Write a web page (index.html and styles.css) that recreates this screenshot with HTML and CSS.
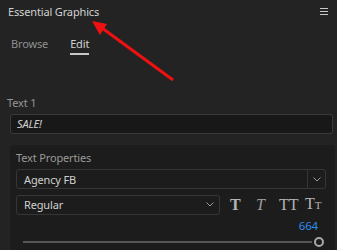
FILE: index.html
```html
<!DOCTYPE html>
<html>
<head>
<meta charset="utf-8">
<link rel="stylesheet" href="styles.css">
</head>
<body>
<div class="app">
  <header class="head">
    <span class="title">Essential Graphics</span>
    <span class="menu"><i></i><i></i><i></i></span>
  </header>
  <nav class="tabs">
    <span class="tab">Browse</span>
    <span class="tab active">Edit</span>
  </nav>
  <section class="layer">
    <div class="label">Text 1</div>
    <div class="field"><span>SALE!</span></div>
  </section>
  <section class="panel">
    <div class="ptitle">Text Properties</div>
    <div class="select wide">
      <span class="val">Agency FB</span>
      <span class="btn"><svg width="8" height="5" viewBox="0 0 8 5"><polyline points="0.5,0.5 4,4 7.5,0.5" fill="none" stroke="#9a9a9a" stroke-width="1"/></svg></span>
    </div>
    <div class="row">
      <div class="select narrow">
        <span class="val">Regular</span>
        <svg class="chev" width="8" height="5" viewBox="0 0 8 5"><polyline points="0.5,0.5 4,4 7.5,0.5" fill="none" stroke="#9a9a9a" stroke-width="1"/></svg>
      </div>
      <div class="styles">
        <span class="st bold">T</span>
        <span class="st ital">T</span>
        <span class="st caps">TT</span>
        <span class="st small">T<small>T</small></span>
      </div>
    </div>
    <div class="num">664</div>
    <div class="slider"><div class="track"></div><div class="knob"></div></div>
  </section>
</div>
<svg class="arrow" width="337" height="250" viewBox="0 0 337 250">
  <line x1="173" y1="80" x2="102" y2="28" stroke="#ee1111" stroke-width="3"/>
  <polygon points="92,21 107,24 100,35" fill="#ee1111"/>
</svg>
</body>
</html>
```
FILE: styles.css
```css
* { box-sizing: border-box; }
html, body { margin: 0; padding: 0; }
body {
  width: 337px;
  height: 250px;
  overflow: hidden;
  background: #232323;
  font-family: "Noto Sans", "Open Sans", sans-serif;
  font-size: 11px;
  letter-spacing: -0.15px;
  color: #cfcfcf;
  position: relative;
}
.app { display: flex; flex-direction: column; }
.head {
  display: flex;
  justify-content: space-between;
  align-items: center;
  height: 22px;
  padding: 0 9px 0 8px;
}
.title { color: #d2d2d2; font-size: 11px; }
.menu { display: flex; flex-direction: column; gap: 2px; }
.menu i { display: block; width: 8px; height: 1px; background: #c8c8c8; }
.tabs {
  display: flex;
  gap: 22px;
  padding: 14px 0 0 11px;
  height: 56px;
}
.tab { color: #8e8e8e; font-size: 11px; height: 19px; line-height: 16px; }
.tab.active { color: #d0d0d0; border-bottom: 2px solid #c8c8c8; }
.layer { padding: 18px 4px 0 7px; }
.label { color: #959595; font-size: 11px; line-height: 14px; height: 18px; }
.field {
  margin-left: 3px;
  height: 20px;
  background: #181818;
  border: 1px solid #3a3a3a;
  border-radius: 3px;
  padding-left: 6px;
  line-height: 18px;
  font-style: italic;
  color: #cfcfcf;
}
.panel {
  margin: 11px 2px 0 10px;
  height: 105px;
  background: #1c1c1c;
  border-radius: 4px 4px 0 0;
  padding: 6px 9px 0 6px;
}
.ptitle { color: #9a9a9a; font-size: 11px; line-height: 14px; height: 18px; }
.select {
  height: 20px;
  border: 1px solid #363636;
  border-radius: 3px;
  display: flex;
  align-items: center;
  color: #d0d0d0;
  font-size: 11px;
}
.select .val { flex: 1; padding-left: 7px; }
.select .btn {
  width: 18px; height: 100%;
  border-left: 1px solid #363636;
  display: flex; align-items: center; justify-content: center;
}
.row { display: flex; align-items: center; margin-top: 5px; }
.narrow { width: 204px; padding-right: 5px; }
.styles { display: flex; align-items: center; margin-left: 10px; font-family: "Liberation Serif", "DejaVu Serif", serif; color: #b4b4b4; letter-spacing: 0; }
.st { font-size: 16px; line-height: 20px; }
.bold { font-weight: bold; width: 26px; }
.ital { font-style: italic; width: 23px; color: #9c9c9c; }
.caps { width: 26px; }
.small small { font-size: 11px; }
.num { color: #2d8ded; font-size: 11.5px; text-align: right; padding-right: 8px; margin-top: 4px; line-height: 14px; }
.slider { position: relative; height: 12px; margin-top: 3px; }
.track { position: absolute; left: 7px; right: 14px; top: 5px; height: 2px; background: #555; }
.knob { position: absolute; right: 2px; top: 1px; width: 10px; height: 10px; border-radius: 50%; border: 2px solid #a8a8a8; background: #1c1c1c; }
.arrow { position: absolute; left: 0; top: 0; pointer-events: none; }
```
